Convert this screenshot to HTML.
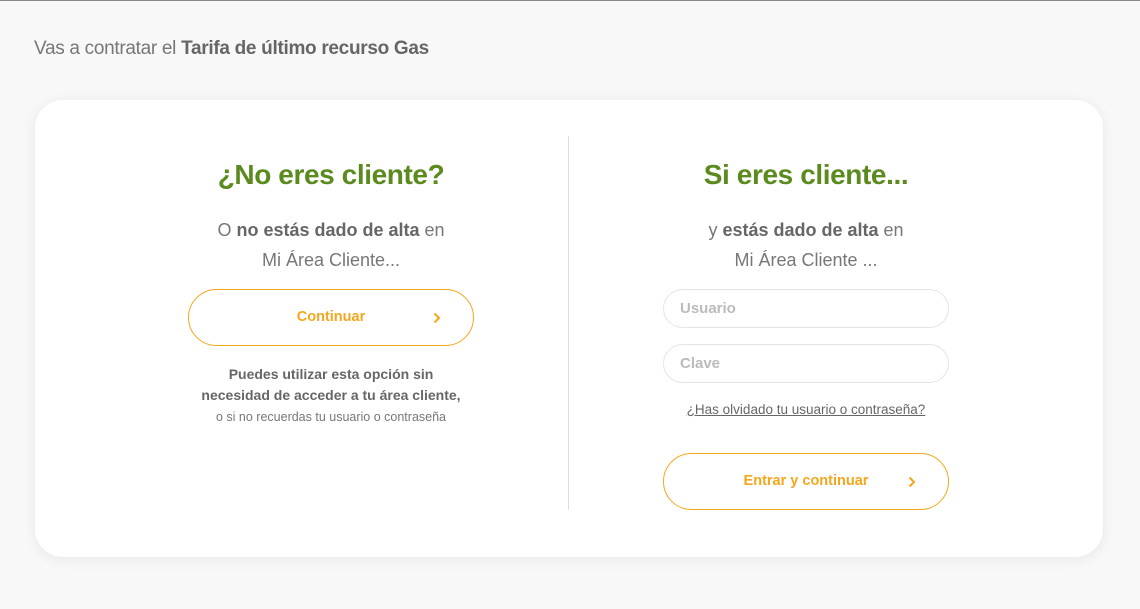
<!DOCTYPE html>
<html><head><meta charset="utf-8"><style>
*{margin:0;padding:0;box-sizing:border-box}
body{width:1140px;height:609px;background:#f8f8f8;font-family:"Liberation Sans",sans-serif;color:#666;position:relative;overflow:hidden;border-top:1px solid #888}
.top{position:absolute;left:34px;top:37px;font-size:19px;color:#777;letter-spacing:-0.3px}
.top b{color:#666;font-weight:bold}
.card{position:absolute;left:35px;top:99px;width:1068px;height:457px;background:#fff;border-radius:28px;box-shadow:0 2px 14px rgba(0,0,0,0.07)}
.div{position:absolute;left:533px;top:36px;width:1px;height:374px;background:#ddd}
.col{position:absolute;top:0;text-align:center}
h2{position:absolute;top:59px;width:100%;font-size:28px;color:#5b8a1e;font-weight:bold;letter-spacing:-0.4px}
.sub{position:absolute;top:115px;width:100%;font-size:18px;line-height:30px;color:#777}
.sub b{color:#666}
.btn{position:absolute;height:57px;border:1px solid #f4a71c;border-radius:29px;color:#f4a71c;font-weight:bold;font-size:14.5px;line-height:55px}
.btn svg{position:absolute;right:31px;top:21px}
.inp{position:absolute;left:0;width:286px;height:39px;border:1px solid #e4e4e4;border-radius:20px;font-size:15px;color:#bbb;font-weight:bold;text-align:left;padding-left:16px;line-height:37px}
</style></head><body>
<div class="top">Vas a contratar el <b>Tarifa de último recurso Gas</b></div>
<div class="card">
<div class="div"></div>
<div class="col" style="left:153px;width:286px">
<h2>¿No eres cliente?</h2>
<div class="sub">O <b>no estás dado de alta</b> en<br>Mi Área Cliente...</div>
<div class="btn" style="left:0;top:189px;width:286px">Continuar<svg width="10" height="14" viewBox="0 0 10 14"><path d="M2.5 2.5l4.5 4.5-4.5 4.5" fill="none" stroke="#f4a71c" stroke-width="2"/></svg></div>
<div style="position:absolute;top:264px;width:100%;font-size:14px;line-height:21px;font-weight:bold;color:#666">Puedes utilizar esta opción sin<br>necesidad de acceder a tu área cliente,</div>
<div style="position:absolute;top:310px;width:100%;font-size:12.5px;color:#777">o si no recuerdas tu usuario o contraseña</div>
</div>
<div class="col" style="left:628px;width:286px">
<h2>Si eres cliente...</h2>
<div class="sub">y <b>estás dado de alta</b> en<br>Mi Área Cliente ...</div>
<div class="inp" style="top:189px">Usuario</div>
<div class="inp" style="top:244px">Clave</div>
<div style="position:absolute;top:302px;width:100%;font-size:13.5px;text-decoration:underline;color:#666">¿Has olvidado tu usuario o contraseña?</div>
<div class="btn" style="left:0;top:353px;width:286px">Entrar y continuar<svg width="10" height="14" viewBox="0 0 10 14"><path d="M2.5 2.5l4.5 4.5-4.5 4.5" fill="none" stroke="#f4a71c" stroke-width="2"/></svg></div>
</div>
</div>
</body></html>
